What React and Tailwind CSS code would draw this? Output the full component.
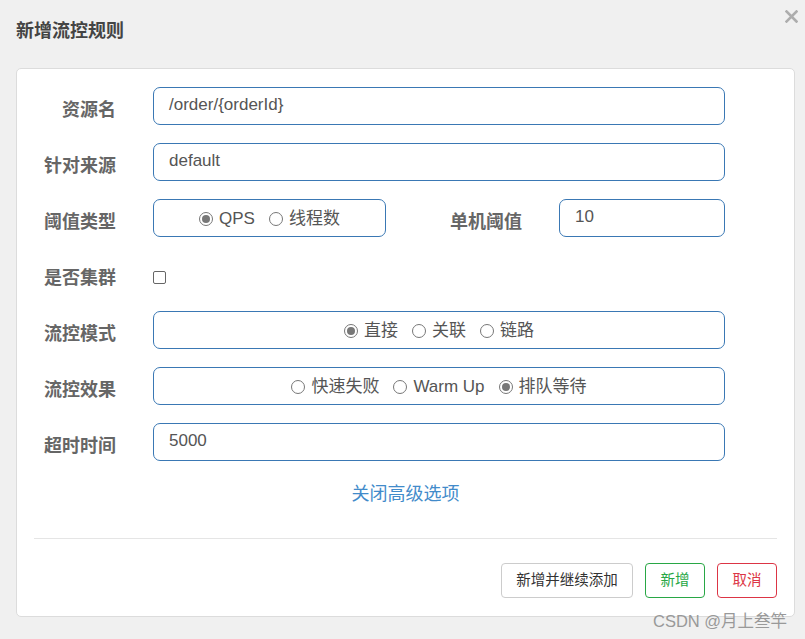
import React from 'react';

const font = { fontFamily: '"Liberation Sans", "Noto Sans CJK SC", sans-serif' };

function Radio({ checked, label }) {
  return (
    <span className="flex items-center">
      <span className="w-[14px] h-[14px] rounded-full border border-[#777] flex items-center justify-center bg-white">
        {checked && <span className="w-[8px] h-[8px] rounded-full bg-[#777]" />}
      </span>
      <span className="ml-[6px] text-[17px] text-[#555]">{label}</span>
    </span>
  );
}

function Label({ children, w = 'w-[99px]' }) {
  return (
    <div className={`${w} text-right text-[18px] font-bold text-[#666] shrink-0 pt-[8px]`}>{children}</div>
  );
}

function TextInput({ value, w = 'w-[572px]' }) {
  return (
    <div className={`${w} h-[38px] border border-[#3a78b4] rounded-[7px] flex items-center pl-[15px] text-[17px] text-[#555] pb-[3px]`}>
      {value}
    </div>
  );
}

function RadioBox({ items, w = 'w-[572px]' }) {
  return (
    <div className={`${w} h-[38px] border border-[#3a78b4] rounded-[7px] flex items-center justify-center gap-[14px] pt-[2px]`}>
      {items.map((it) => (
        <Radio key={it.label} checked={it.checked} label={it.label} />
      ))}
    </div>
  );
}

export default function App() {
  return (
    <div className="w-[805px] h-[639px] bg-[#f0f0f0] relative overflow-hidden" style={font}>
      <div className="h-[68px] flex items-center pl-[16px] pb-[6px]">
        <h4 className="text-[18px] font-bold text-[#444]">新增流控规则</h4>
      </div>
      <button className="absolute right-[7px] top-[10px] w-[13px] h-[13px]">
        <svg viewBox="0 0 13 13" width="13" height="13">
          <path d="M1.5 1.5 L11.5 11.5 M11.5 1.5 L1.5 11.5" stroke="#adadad" strokeWidth="2.6" strokeLinecap="square" />
        </svg>
      </button>

      <div className="ml-[16px] w-[779px] h-[549px] bg-white border border-[#dcdcdc] rounded-[5px] pt-[18px] flex flex-col">
        <div className="flex flex-col gap-[18px]">
          <div className="flex items-center">
            <Label>资源名</Label>
            <div className="ml-[37px]"><TextInput value="/order/{orderId}" /></div>
          </div>
          <div className="flex items-center">
            <Label>针对来源</Label>
            <div className="ml-[37px]"><TextInput value="default" /></div>
          </div>
          <div className="flex items-center">
            <Label>阈值类型</Label>
            <div className="ml-[37px]">
              <RadioBox w="w-[233px]" items={[{ label: 'QPS', checked: true }, { label: '线程数' }]} />
            </div>
            <Label w="w-[136px]">单机阈值</Label>
            <div className="ml-[37px]"><TextInput w="w-[166px]" value="10" /></div>
          </div>
          <div className="flex items-center h-[38px]">
            <Label>是否集群</Label>
            <div className="ml-[37px] mt-[6px] w-[13px] h-[13px] border border-[#666] rounded-[2px] bg-white" />
          </div>
          <div className="flex items-center">
            <Label>流控模式</Label>
            <div className="ml-[37px]">
              <RadioBox items={[{ label: '直接', checked: true }, { label: '关联' }, { label: '链路' }]} />
            </div>
          </div>
          <div className="flex items-center">
            <Label>流控效果</Label>
            <div className="ml-[37px]">
              <RadioBox items={[{ label: '快速失败' }, { label: 'Warm Up' }, { label: '排队等待', checked: true }]} />
            </div>
          </div>
          <div className="flex items-center">
            <Label>超时时间</Label>
            <div className="ml-[37px]"><TextInput value="5000" /></div>
          </div>
        </div>

        <div className="mt-[21px] h-[24px] flex justify-center">
          <a className="text-[18px] leading-[24px] text-[#428bca] cursor-pointer">关闭高级选项</a>
        </div>

        <div className="mx-[17px] mt-[32px] border-t border-[#e5e5e5]" />

        <div className="mx-[17px] mt-[24px] flex justify-end gap-[12px]">
          <button className="h-[35px] w-[132px] border border-[#cccccc] rounded-[4px] text-[14.5px] text-[#333] bg-white">新增并继续添加</button>
          <button className="h-[35px] w-[60px] border border-[#28a745] rounded-[4px] text-[14.5px] text-[#28a745] bg-white">新增</button>
          <button className="h-[35px] w-[60px] border border-[#dc3545] rounded-[4px] text-[14.5px] text-[#dc3545] bg-white">取消</button>
        </div>
      </div>

      <div className="absolute left-[653px] top-[611px] text-[16.5px] text-[#999] leading-[20px]">CSDN @月上叁竿</div>
    </div>
  );
}
